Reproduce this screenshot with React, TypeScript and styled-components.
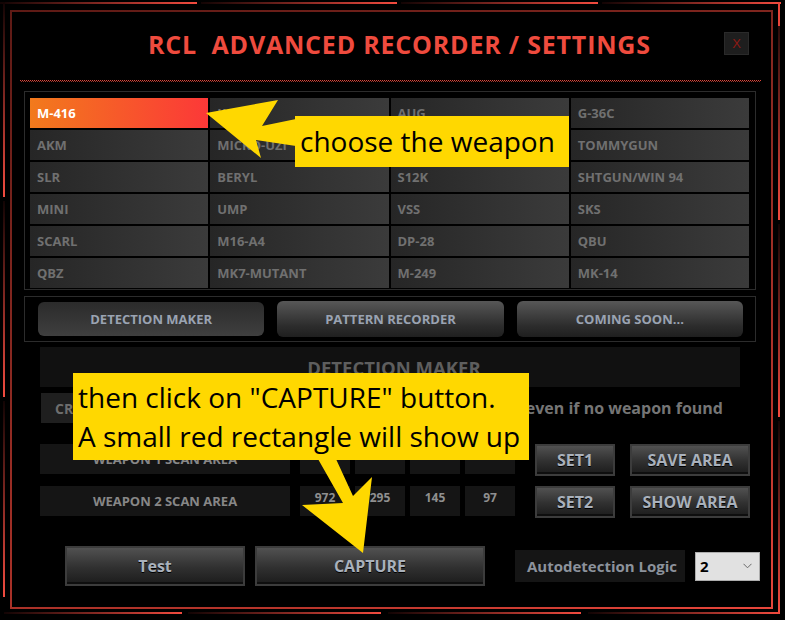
import React from 'react'
import styled, { createGlobalStyle, css } from 'styled-components'

const GlobalStyle = createGlobalStyle`
  html, body {
    margin: 0;
    padding: 0;
    background: #000;
  }
  body {
    width: 785px;
    height: 620px;
    overflow: hidden;
    font-family: "Open Sans", "Noto Sans", sans-serif;
  }
`

const Stage = styled.div`
  position: relative;
  width: 785px;
  height: 620px;
  padding: 10px;
  box-sizing: border-box;
  background: #000;
`

const FrameArt = styled.svg`
  position: absolute;
  left: 0;
  top: 0;
  pointer-events: none;
`

const Window = styled.div`
  position: relative;
  width: 763px;
  height: 599px;
  box-sizing: border-box;
  border: 2px solid;
  border-image: linear-gradient(160deg, #5e1a15 0%, #8e2a22 45%, #b8352b 80%, #e8463b 100%) 1;
`

const TitleRow = styled.div`
  height: 64px;
  display: flex;
  align-items: center;
  padding-left: 136px;
`

const Title = styled.h1`
  margin: 0;
  font-size: 25px;
  font-weight: 700;
  color: #ef4b3e;
  white-space: pre;
  letter-spacing: 0.8px;
`

const CloseBtn = styled.button`
  margin-left: auto;
  margin-right: 22px;
  margin-top: -2px;
  width: 25px;
  height: 23px;
  padding: 0;
  background: #1e1e1e;
  border: 1px solid #2a2a2a;
  color: #8e1a14;
  font-family: "Liberation Sans", sans-serif;
  font-size: 13px;
`

const DottedRule = styled.div`
  height: 2px;
  margin: 4px 10px 0 8px;
  background-image:
    repeating-linear-gradient(90deg, #e0463a 0 1px, transparent 1px 2px),
    repeating-linear-gradient(90deg, transparent 0 1px, #a5342b 1px 2px);
  background-size: 100% 1px, 100% 1px;
  background-position: 0 0, 0 1px;
  background-repeat: no-repeat;
`

const GridBox = styled.div`
  margin: 9px 15px 0 12px;
  border: 1px solid #2c2c2c;
  padding: 6px 6px 1px 5px;
  display: grid;
  grid-template-columns: repeat(4, 1fr);
  grid-auto-rows: 30px;
  gap: 2px;
`

const WeaponCell = styled.div<{ $active?: boolean }>`
  display: flex;
  align-items: center;
  padding-left: 7px;
  font-size: 13px;
  font-weight: 700;
  color: #707070;
  background: linear-gradient(90deg, #262626, #3b3b3b);
  ${p => p.$active && css`
    color: #fff;
    background: linear-gradient(90deg, #f27a1c, #fc3838);
  `}
`

const TabBox = styled.div`
  margin: 6px 15px 0 12px;
  border: 1px solid #2c2c2c;
  padding: 4px 12px 4px 13px;
  display: flex;
  gap: 13px;
`

const Tab = styled.button<{ $active?: boolean }>`
  flex: 1;
  height: 36px;
  border: none;
  border-radius: 6px;
  font-family: inherit;
  font-size: 13px;
  font-weight: 700;
  color: #9aa3b2;
  background: linear-gradient(180deg, #575757, #2c2c2c 70%, #1f1f1f);
  ${p => p.$active && css`
    height: 34px;
    margin-top: 1px;
    background: linear-gradient(180deg, #2b2b2b, #3f3f3f);
  `}
`

const Section = styled.div`
  margin-left: 28px;
  width: 700px;
`

const SectionHead = styled.div`
  margin-top: 5px;
  height: 40px;
  background: #111;
  display: flex;
  align-items: center;
  justify-content: center;
  padding-left: 8px;
  font-size: 18.5px;
  font-weight: 700;
  color: #5e5e5e;
`

const OptionRow = styled.div`
  margin-top: 5px;
  height: 32px;
  display: flex;
  align-items: center;
`

const DarkBox = styled.div<{ $w: number; $h?: number; $size?: number }>`
  width: ${p => p.$w}px;
  height: ${p => p.$h ?? 30}px;
  flex: none;
  background: #151515;
  display: flex;
  align-items: center;
  justify-content: center;
  font-size: ${p => p.$size ?? 13}px;
  font-weight: 700;
  color: #878787;
`

const CropBtn = styled(DarkBox)`
  margin-left: 1px;
  background: #1f1f1f;
  justify-content: flex-start;
  padding-left: 14px;
  color: #6e6e6e;
`

const CheckLabel = styled.span`
  margin-left: auto;
  margin-right: 17px;
  font-size: 16px;
  font-weight: 700;
  color: #757575;
`

const ScanList = styled.div`
  margin-top: 20px;
  display: flex;
  flex-direction: column;
  gap: 10px;
`

const ScanRow = styled.div`
  height: 32px;
  display: flex;
  align-items: flex-start;
`

const Coords = styled.div`
  margin-left: 10px;
  display: flex;
  gap: 5px;
`

const Coord = styled.div`
  width: 50px;
  height: 30px;
  background: #151515;
  text-align: center;
  padding-top: 3px;
  box-sizing: border-box;
  font-size: 12px;
  font-weight: 700;
  color: #8f8f8f;
`

const RaisedBtn = styled.button<{ $w: number; $h: number; $ml: number }>`
  width: ${p => p.$w}px;
  height: ${p => p.$h}px;
  margin-left: ${p => p.$ml}px;
  flex: none;
  padding: 0;
  box-sizing: border-box;
  border: 2px solid #3c3c3c;
  background: linear-gradient(180deg, #515151, #303030 55%, #1c1c1c);
  box-shadow: inset 0 -2px 0 #0e0e0e;
  font-family: inherit;
  font-size: 16px;
  font-weight: 700;
  color: #a9b1bc;
  text-shadow: 0 1px 0 #000;
`

const BottomRow = styled.div`
  margin-top: 28px;
  display: flex;
  align-items: center;
  height: 40px;
`

const LogicLabel = styled(DarkBox)`
  margin-left: 30px;
  padding-left: 4px;
  box-sizing: border-box;
  color: #8c929c;
`

const Select = styled.div`
  margin-left: 10px;
  flex: none;
  width: 65px;
  height: 29px;
  box-sizing: border-box;
  background: #e1e1e1;
  border: 1px solid #adadad;
  display: flex;
  align-items: center;
  justify-content: space-between;
  padding: 0 7px 0 4px;
  font-size: 15px;
  font-weight: 700;
  color: #000;
`

const Overlay = styled.svg`
  position: absolute;
  left: 0;
  top: 0;
  pointer-events: none;
`

const Callout = styled.div<{ $x: number; $y: number; $w: number; $h: number; $lh: number; $pt: number }>`
  position: absolute;
  left: ${p => p.$x}px;
  top: ${p => p.$y}px;
  width: ${p => p.$w}px;
  height: ${p => p.$h}px;
  box-sizing: border-box;
  background: #ffd800;
  color: #000;
  font-size: 28px;
  font-weight: 400;
  line-height: ${p => p.$lh}px;
  padding: ${p => p.$pt}px 0 0 5px;
  white-space: nowrap;
`

const weapons = [
  'M-416', 'KAR98K', 'AUG', 'G-36C',
  'AKM', 'MICRO-UZI', 'GROZA', 'TOMMYGUN',
  'SLR', 'BERYL', 'S12K', 'SHTGUN/WIN 94',
  'MINI', 'UMP', 'VSS', 'SKS',
  'SCARL', 'M16-A4', 'DP-28', 'QBU',
  'QBZ', 'MK7-MUTANT', 'M-249', 'MK-14',
]

const hSegs = [
  [0, 197], [201, 397], [401, 598], [602, 781],
]
const bSegs = [
  [4, 182], [188, 381], [388, 581], [588, 780],
]
const lSegs = [
  [2, 197], [201, 397], [401, 597],
]
const rSegs = [
  [2, 220], [224, 417], [421, 612],
]

const App = () => {
  return (
    <>
      <GlobalStyle />
      <Stage>
        <FrameArt width={785} height={620}>
          <defs>
            <linearGradient id="gh" x1="0" x2="1" y1="0" y2="0">
              <stop offset="0" stopColor="#120404" />
              <stop offset="1" stopColor="#f24b3f" />
            </linearGradient>
            <linearGradient id="gv" x1="0" x2="0" y1="0" y2="1">
              <stop offset="0" stopColor="#120404" />
              <stop offset="1" stopColor="#f24b3f" />
            </linearGradient>
          </defs>
          {hSegs.map(([a, b]) => (
            <rect key={'t' + a} x={a} y={2} width={b - a} height={2} fill="url(#gh)" />
          ))}
          {bSegs.map(([a, b]) => (
            <rect key={'b' + a} x={a} y={612} width={b - a} height={2} fill="url(#gh)" />
          ))}
          {lSegs.map(([a, b]) => (
            <rect key={'l' + a} x={3} y={a} width={2} height={b - a} fill="url(#gv)" />
          ))}
          {rSegs.map(([a, b]) => (
            <rect key={'r' + a} x={778} y={a} width={2} height={b - a} fill="url(#gv)" />
          ))}
          <rect x={778} y={2} width={2} height={24} fill="#e8463b" />
        </FrameArt>

        <Window>
          <TitleRow>
            <Title>{'RCL  ADVANCED RECORDER / SETTINGS'}</Title>
            <CloseBtn>X</CloseBtn>
          </TitleRow>
          <DottedRule />

          <GridBox>
            {weapons.map((w, i) => (
              <WeaponCell key={w} $active={i === 0}>{w}</WeaponCell>
            ))}
          </GridBox>

          <TabBox>
            <Tab $active>DETECTION MAKER</Tab>
            <Tab>PATTERN RECORDER</Tab>
            <Tab>COMING SOON...</Tab>
          </TabBox>

          <Section>
            <SectionHead>DETECTION MAKER</SectionHead>
            <OptionRow>
              <CropBtn $w={110} $h={30} $size={14}>CROP AREA</CropBtn>
              <CheckLabel>Keep last weapon even if no weapon found</CheckLabel>
            </OptionRow>

            <ScanList>
              <ScanRow>
                <DarkBox $w={250}>WEAPON 1 SCAN AREA</DarkBox>
                <Coords>
                  <Coord />
                  <Coord />
                  <Coord />
                  <Coord />
                </Coords>
                <RaisedBtn $w={80} $h={32} $ml={20}>SET1</RaisedBtn>
                <RaisedBtn $w={120} $h={32} $ml={15}>SAVE AREA</RaisedBtn>
              </ScanRow>
              <ScanRow>
                <DarkBox $w={250}>WEAPON 2 SCAN AREA</DarkBox>
                <Coords>
                  <Coord>972</Coord>
                  <Coord>295</Coord>
                  <Coord>145</Coord>
                  <Coord>97</Coord>
                </Coords>
                <RaisedBtn $w={80} $h={32} $ml={20}>SET2</RaisedBtn>
                <RaisedBtn $w={120} $h={32} $ml={15}>SHOW AREA</RaisedBtn>
              </ScanRow>
            </ScanList>

            <BottomRow>
              <RaisedBtn $w={180} $h={40} $ml={25}>Test</RaisedBtn>
              <RaisedBtn $w={230} $h={40} $ml={10}>CAPTURE</RaisedBtn>
              <LogicLabel $w={170} $h={32} $size={15}>Autodetection Logic</LogicLabel>
              <Select>
                <span>2</span>
                <svg width="9" height="6" viewBox="0 0 9 6">
                  <path d="M0.5 0.8 L4.5 4.8 L8.5 0.8" fill="none" stroke="#6a6a6a" strokeWidth="1" />
                </svg>
              </Select>
            </BottomRow>
          </Section>
        </Window>

        <Overlay width={785} height={620}>
          <polygon
            points="206,113 278,100 262,126 296,119 296,146 256,140 261,158"
            fill="#ffd800"
          />
          <polygon
            points="318,459 336,459 353,496 372,477 363,553 302,505 343,503"
            fill="#ffd800"
          />
        </Overlay>
        <Callout $x={295} $y={116} $w={274} $h={51} $lh={51} $pt={0}>
          choose the weapon
        </Callout>
        <Callout $x={73} $y={373} $w={456} $h={87} $lh={39} $pt={5}>
          then click on "CAPTURE" button.
          <br />
          A small red rectangle will show up
        </Callout>
      </Stage>
    </>
  )
}

export default App
